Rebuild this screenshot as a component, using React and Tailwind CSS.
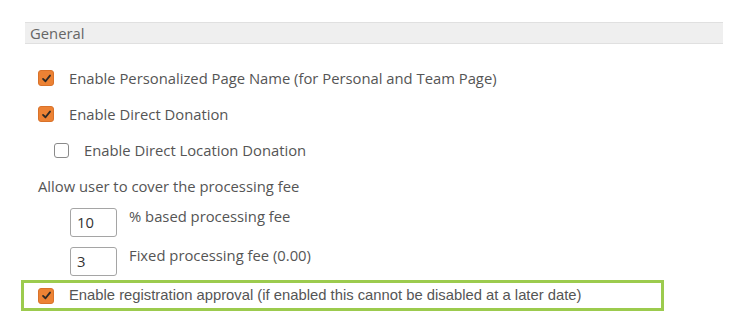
import React from 'react';

function Check({ checked }) {
  if (!checked) {
    return (
      <span className="inline-block w-[15px] h-[15px] rounded-[3px] border-[1.5px] border-[#8a8a8a] bg-white shrink-0"></span>
    );
  }
  return (
    <span className="inline-flex items-center justify-center w-[16px] h-[16px] rounded-[3px] bg-[#ec8234] border border-[#d9722a] shrink-0">
      <svg width="11" height="11" viewBox="0 0 12 12" fill="none">
        <path d="M2.2 6.4 L4.9 9 L9.8 2.8" stroke="#2e2a26" strokeWidth="2" strokeLinecap="round" strokeLinejoin="round" />
      </svg>
    </span>
  );
}

function Row({ checked, indent, children }) {
  return (
    <div className={`h-[36px] flex items-center ${indent ? 'pl-[54px]' : 'pl-[38px]'}`}>
      <Check checked={checked} />
      <span className="ml-[15px]">{children}</span>
    </div>
  );
}

function FeeInput({ value, label }) {
  return (
    <div className="flex items-start pl-[70px]">
      <div className="w-[47px] h-[29px] border border-[#a5a5a5] rounded-[3px] flex items-center pl-[6px] text-[#333]">
        {value}
      </div>
      <span className="ml-[12px] leading-[20px] -mt-[2px]">{label}</span>
    </div>
  );
}

export default function App() {
  return (
    <div className="w-[730px] h-[322px] bg-white overflow-hidden text-[14.8px] text-[#555] font-['Open_Sans',sans-serif]">
      <div className="pt-[22px] pl-[25px] pr-[7px]">
        <div className="h-[22px] bg-[#efefef] border-y border-[#e0e0e0] flex items-center pl-[5px] text-[14.8px] text-[#666]">
          General
        </div>
      </div>

      <div className="mt-[16px]">
        <Row checked>Enable Personalized Page Name (for Personal and Team Page)</Row>
        <Row checked>Enable Direct Donation</Row>
        <Row indent>Enable Direct Location Donation</Row>
        <div className="h-[36px] flex items-center pl-[38px]">Allow user to cover the processing fee</div>
      </div>

      <div className="mt-[4px] flex flex-col gap-[10px]">
        <FeeInput value="10" label="% based processing fee" />
        <FeeInput value="3" label="Fixed processing fee (0.00)" />
      </div>

      <div className="mt-[4px] ml-[21px] w-[643px] h-[31px] border-[3px] border-[#9ccb4e] flex items-center pl-[14px] font-['Liberation_Sans',Arial,sans-serif] text-[14.8px] text-[#555]">
        <Check checked />
        <span className="ml-[15px]">Enable registration approval (if enabled this cannot be disabled at a later date)</span>
      </div>
    </div>
  );
}
